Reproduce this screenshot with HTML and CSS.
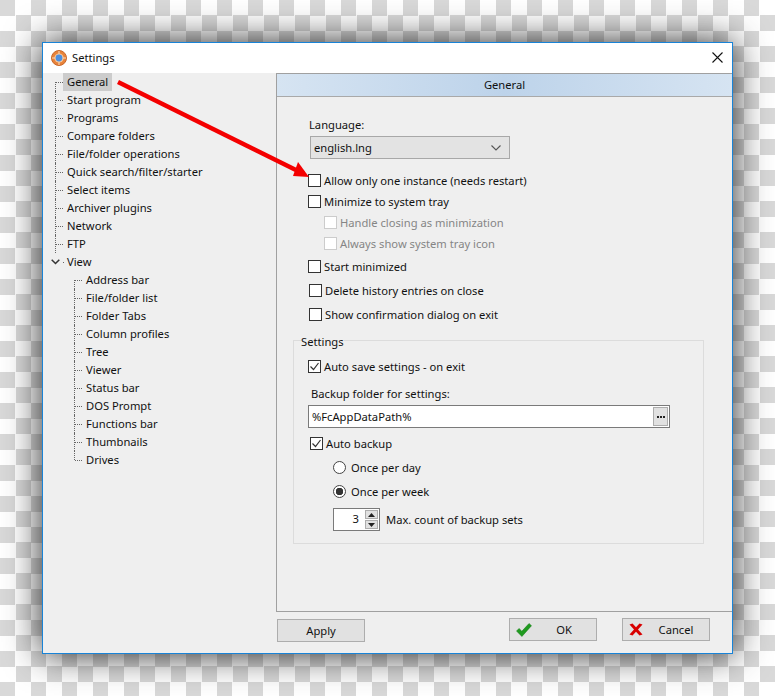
FILE: index.html
```html
<!DOCTYPE html>
<html lang="en">
<head>
    <meta charset="UTF-8">
    <meta name="viewport" content="width=device-width, initial-scale=1.0">
    <title>Settings</title>
    <link rel="stylesheet" href="styles.css">
</head>
<body>

    <div class="dialog">
        <header class="titlebar">
            <svg class="app-icon" viewBox="0 0 16 16">
                <circle cx="8" cy="8" r="7.5" fill="#e8833a"/>
                <circle cx="8" cy="8" r="7.5" fill="none" stroke="#c9682a" stroke-width="1"/>
                <circle cx="8" cy="8" r="4.6" fill="#f3c9a0"/>
                <circle cx="8" cy="8" r="3.4" fill="#4d8fe0"/>
                <path d="M8 1v3M8 12v3M1 8h3M12 8h3" stroke="#f7dcc0" stroke-width="1"/>
            </svg>
            <span class="title-text">Settings</span>
            <svg class="close-icon" viewBox="0 0 11 11">
                <path d="M0.5 0.5l10 10M10.5 0.5l-10 10" stroke="#111" stroke-width="1.1" fill="none"/>
            </svg>
        </header>

        <div class="dialog-body">
            <nav class="tree-pane">
                <ul class="tree">
                    <li class="node"><span class="node-label selected">General</span></li>
                    <li class="node"><span class="node-label">Start program</span></li>
                    <li class="node"><span class="node-label">Programs</span></li>
                    <li class="node"><span class="node-label">Compare folders</span></li>
                    <li class="node"><span class="node-label">File/folder operations</span></li>
                    <li class="node"><span class="node-label">Quick search/filter/starter</span></li>
                    <li class="node"><span class="node-label">Select items</span></li>
                    <li class="node"><span class="node-label">Archiver plugins</span></li>
                    <li class="node"><span class="node-label">Network</span></li>
                    <li class="node"><span class="node-label">FTP</span></li>
                    <li class="node node-open">
                        <svg class="chevron" viewBox="0 0 9 6">
                            <path d="M0.7 0.7l3.8 3.8 3.8-3.8" fill="none" stroke="#333" stroke-width="1.5"/>
                        </svg>
                        <span class="node-label">View</span>
                    </li>
                </ul>
                <ul class="tree subtree">
                    <li class="node"><span class="node-label">Address bar</span></li>
                    <li class="node"><span class="node-label">File/folder list</span></li>
                    <li class="node"><span class="node-label">Folder Tabs</span></li>
                    <li class="node"><span class="node-label">Column profiles</span></li>
                    <li class="node"><span class="node-label">Tree</span></li>
                    <li class="node"><span class="node-label">Viewer</span></li>
                    <li class="node"><span class="node-label">Status bar</span></li>
                    <li class="node"><span class="node-label">DOS Prompt</span></li>
                    <li class="node"><span class="node-label">Functions bar</span></li>
                    <li class="node"><span class="node-label">Thumbnails</span></li>
                    <li class="node"><span class="node-label">Drives</span></li>
                </ul>
            </nav>

            <main class="panel">
                <div class="panel-header">General</div>
                <div class="panel-body">
                    <div class="top-options">
                        <div class="field-label lang-label">Language:</div>
                        <div class="select">
                            <span>english.lng</span>
                            <svg class="select-arrow" viewBox="0 0 10 6">
                                <path d="M0.5 0.5l4.5 4.5 4.5-4.5" fill="none" stroke="#555" stroke-width="1.1"/>
                            </svg>
                        </div>

                        <div class="row first-row"><span class="check"></span>Allow only one instance (needs restart)</div>
                        <div class="row"><span class="check"></span>Minimize to system tray</div>
                        <div class="row row-sub disabled"><span class="check"></span>Handle closing as minimization</div>
                        <div class="row row-sub disabled"><span class="check"></span>Always show system tray icon</div>
                        <div class="row row-gap2"><span class="check"></span>Start minimized</div>
                        <div class="row row-gap3 row-shift"><span class="check"></span>Delete history entries on close</div>
                        <div class="row row-gap3 row-shift"><span class="check"></span>Show confirmation dialog on exit</div>
                    </div>

                    <section class="group">
                        <div class="group-title">Settings</div>
                        <div class="row autosave-row">
                            <span class="check">
                                <svg viewBox="0 0 13 13"><path d="M2.5 6.5l3 3 5-6.5" fill="none" stroke="#333" stroke-width="1.2"/></svg>
                            </span>Auto save settings - on exit
                        </div>
                        <div class="field-label backup-label">Backup folder for settings:</div>
                        <div class="path-input">
                            <span>%FcAppDataPath%</span>
                            <span class="browse-btn">
                                <i></i><i></i><i></i>
                            </span>
                        </div>
                        <div class="row backup-row">
                            <span class="check">
                                <svg viewBox="0 0 13 13"><path d="M2.5 6.5l3 3 5-6.5" fill="none" stroke="#333" stroke-width="1.2"/></svg>
                            </span>Auto backup
                        </div>
                        <div class="row radio-row"><span class="radio"></span>Once per day</div>
                        <div class="row radio-row"><span class="radio radio-on"></span>Once per week</div>
                        <div class="spin-row">
                            <div class="spin">
                                <span class="spin-value">3</span>
                                <span class="spin-btns">
                                    <span class="spin-btn"><svg viewBox="0 0 7 4"><path d="M3.5 0l3.5 4H0z" fill="#222"/></svg></span>
                                    <span class="spin-btn"><svg viewBox="0 0 7 4"><path d="M0 0h7L3.5 4z" fill="#222"/></svg></span>
                                </span>
                            </div>
                            <span>Max. count of backup sets</span>
                        </div>
                    </section>
                </div>
            </main>
        </div>

        <footer class="buttons">
            <button class="btn btn-apply">Apply</button>
            <button class="btn btn-ok">
                <svg class="btn-icon" viewBox="0 0 16 14"><path d="M0.5 8l2.6-2.6 2.7 2.9L13 0.5l2.5 2.2-9.6 10.8z" fill="#1f9a1f" stroke="#137a13" stroke-width="0.5"/></svg>
                <span>OK</span>
            </button>
            <button class="btn btn-cancel">
                <svg class="btn-icon" viewBox="0 0 14 13"><path d="M0.5 1.5L3.5 0.5 7 4.2 10.5 0.5 13.5 1.5 9 6.5 13.5 11.5 10.5 12.5 7 8.8 3.5 12.5 0.5 11.5 5 6.5z" fill="#d80000"/></svg>
                <span>Cancel</span>
            </button>
        </footer>

        <svg class="arrow" viewBox="0 0 200 110">
            <path d="M1 1L187 93" stroke="#f40000" stroke-width="4.5" fill="none"/>
            <path d="M181 81L176 95 192 96z" fill="#f40000"/>
        </svg>
    </div>

</body>
</html>
```

FILE: styles.css
```css
/* General */
* {
    margin: 0;
    padding: 0;
    box-sizing: border-box;
    font-family: "Noto Sans", "Open Sans", sans-serif;
}

body {
    width: 775px;
    height: 696px;
    padding: 42px 0 0 42px;
    overflow: hidden;
    font-size: 11.2px;
    color: #111;
    background: conic-gradient(#fff 25%, #d9d9d9 0 50%, #fff 0 75%, #d9d9d9 0) 0 0 / 31px 31px;
}

ul {
    list-style: none;
}

/* Dialog window */
.dialog {
    position: relative;
    width: 691px;
    height: 612px;
    display: flex;
    flex-direction: column;
    background: #efefef;
    border: 1px solid #1883d7;
    box-shadow: 0 0 34px rgba(0, 0, 0, 0.85);
}

.titlebar {
    height: 30px;
    display: flex;
    align-items: center;
    padding: 0 9px 1px 8px;
    background: #fff;
}

.app-icon {
    width: 16px;
    height: 16px;
}

.title-text {
    margin-left: 5px;
    flex: 1;
}

.close-icon {
    width: 11px;
    height: 11px;
}

.dialog-body {
    flex: 1;
    display: flex;
    min-height: 0;
}

/* Tree */
.tree-pane {
    width: 233px;
    padding-left: 12px;
}

.node {
    position: relative;
    height: 18px;
    display: flex;
    align-items: center;
    padding-left: 1px;
}

.node::before {
    content: "";
    width: 7px;
    border-top: 1px dotted #666;
}

.node::after {
    content: "";
    position: absolute;
    left: 0;
    top: 0;
    bottom: 0;
    border-left: 1px dotted #666;
}

.node:first-child::after {
    top: 9px;
}

.node:last-child::after {
    bottom: 9px;
}

.node-label {
    padding: 0 4px;
    line-height: 18px;
}

.selected {
    background: #ccc;
}

.node-open::before {
    width: 1px;
    margin-left: 7px;
    margin-right: -1px;
}

.node-open::after {
    display: none;
}

.chevron {
    position: absolute;
    left: -4px;
    top: 6px;
    width: 9px;
    height: 6px;
}

.subtree {
    margin-left: 19px;
}

/* Right panel */
.panel {
    width: 456px;
    display: flex;
    flex-direction: column;
    border-bottom: 1px solid #a0a0a0;
    border-left: 1px solid #a0a0a0;
    border-top: 1px solid #a0a0a0;
}

.panel-header {
    height: 23px;
    line-height: 22px;
    text-align: center;
    background: linear-gradient(90deg, #d6e4f2, #bdd3ea 50%, #d6e4f2);
    border-bottom: 1px solid #a9a9a9;
}

.panel-body {
    padding: 19px 0 0 16px;
}

.top-options {
    padding-left: 15px;
}

.field-label {
    height: 18px;
    line-height: 18px;
}

.lang-label {
    margin-left: 1px;
}

.select {
    width: 200px;
    height: 23px;
    margin: 2px 0 0 2px;
    padding: 0 6px 0 3px;
    display: flex;
    align-items: center;
    justify-content: space-between;
    background: #e3e3e3;
    border: 1px solid #a8a8a8;
}

.select-arrow {
    width: 10px;
    height: 6px;
    margin-right: 2px;
}

/* Checkbox rows */
.row {
    height: 21px;
    display: flex;
    align-items: center;
}

.first-row {
    margin-top: 11px;
}

.row-sub {
    padding-left: 16px;
}

.row-gap2 {
    margin-top: 2px;
}

.row-gap3 {
    margin-top: 3px;
}

.row-shift {
    padding-left: 1px;
}

.disabled {
    color: #858585;
}

.check {
    width: 13px;
    height: 13px;
    flex: none;
    margin-right: 3px;
    background: #fff;
    border: 1px solid #333;
    display: flex;
}

.check svg {
    width: 13px;
    height: 13px;
    margin: -1px;
    flex: none;
}

.disabled .check {
    border-color: #ccc;
}

/* Settings group */
.group {
    width: 411px;
    height: 204px;
    margin-top: 15px;
    padding: 0 14px;
    border: 1px solid #dcdcdc;
}

.group-title {
    width: fit-content;
    height: 18px;
    line-height: 18px;
    margin: -8px 0 0 -7px;
    background: #efefef;
}

.autosave-row {
    margin-top: 5px;
}

.backup-label {
    margin: 8px 0 0 3px;
}

.path-input {
    width: 362px;
    height: 23px;
    margin-top: 2px;
    padding: 0 1px 0 3px;
    display: flex;
    align-items: center;
    justify-content: space-between;
    background: #fff;
    border: 1px solid #7a7a7a;
}

.browse-btn {
    width: 15px;
    height: 19px;
    display: flex;
    align-items: center;
    justify-content: center;
    gap: 1px;
    background: #e1e1e1;
    border: 1px solid #adadad;
}

.browse-btn i {
    width: 2px;
    height: 2px;
    background: #222;
}

.backup-row {
    margin-top: 5px;
    padding-left: 2px;
}

.radio-row {
    margin-top: 3px;
    padding-left: 25px;
}

.radio {
    width: 13px;
    height: 13px;
    flex: none;
    margin-right: 5px;
    background: #fff;
    border: 1px solid #444;
    border-radius: 50%;
}

.radio-on {
    background: radial-gradient(circle, #333 0 3.5px, #fff 4px);
}

.spin-row {
    margin-top: 6px;
    padding-left: 25px;
    display: flex;
    align-items: center;
    gap: 6px;
}

.spin {
    width: 47px;
    height: 23px;
    display: flex;
    background: #fff;
    border: 1px solid #7a7a7a;
}

.spin-value {
    flex: 1;
    text-align: right;
    line-height: 20px;
    padding-right: 5px;
}

.spin-btns {
    width: 15px;
    padding: 1px;
    display: flex;
    flex-direction: column;
    gap: 1px;
}

.spin-btn {
    flex: 1;
    display: flex;
    align-items: center;
    justify-content: center;
    background: #e1e1e1;
    border: 1px solid #adadad;
}

.spin-btn svg {
    width: 7px;
    height: 4px;
}

/* Footer buttons */
.buttons {
    height: 41px;
    padding-left: 234px;
    display: flex;
    align-items: flex-start;
    padding-top: 7px;
}

.btn {
    width: 88px;
    height: 23px;
    display: flex;
    align-items: center;
    justify-content: center;
    font-size: 11.2px;
    color: #111;
    background: #e1e1e1;
    border: 1px solid #adadad;
}

.btn-ok {
    margin: -1px 0 0 144px;
    position: relative;
}

.btn-cancel {
    margin: -1px 0 0 25px;
    position: relative;
}

.btn-icon {
    position: absolute;
    left: 6px;
    top: 4px;
    width: 16px;
    height: 14px;
}

.btn-cancel .btn-icon {
    width: 14px;
    height: 13px;
}

.btn-ok span {
    margin-left: 22px;
}

.btn-cancel span {
    margin-left: 20px;
}

/* Red annotation arrow, drawn over the dialog */
.arrow {
    position: absolute;
    left: 74px;
    top: 38px;
    width: 200px;
    height: 110px;
    overflow: visible;
}
```
